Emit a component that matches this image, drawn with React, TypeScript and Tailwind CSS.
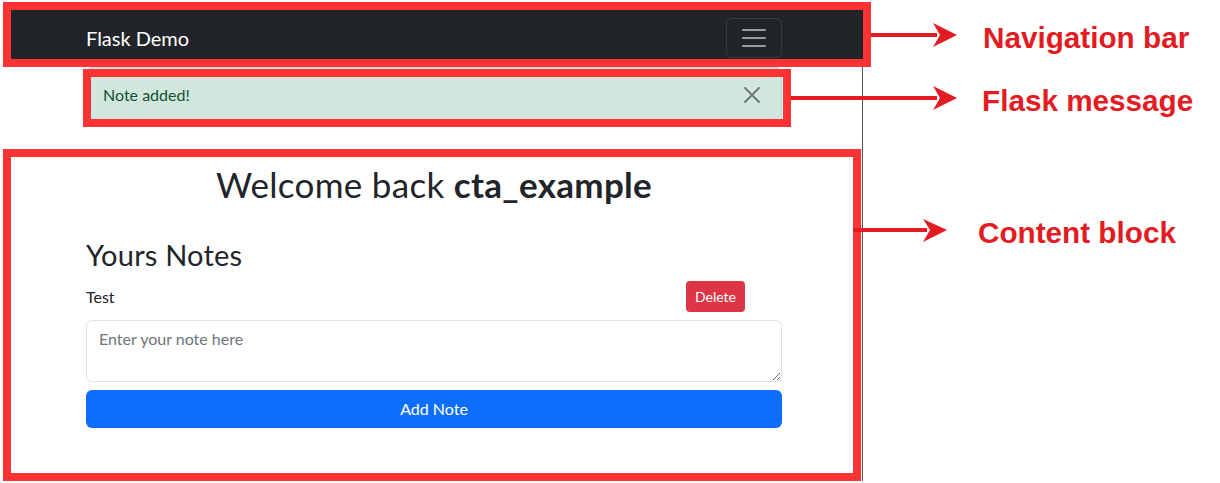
import React from 'react'

const labelClass =
    'absolute text-[29.7px] leading-[30px] font-bold text-[#e31b23] whitespace-nowrap'

function Hamburger() {
    return (
        <svg width="30" height="30" viewBox="0 0 30 30">
            <path
                d="M4 7h22M4 15h22M4 23h22"
                stroke="rgba(255,255,255,0.55)"
                strokeWidth="2"
                strokeLinecap="round"
            />
        </svg>
    )
}

function CloseIcon() {
    return (
        <svg width="16" height="16" viewBox="0 0 16 16">
            <path
                d="M1 1l14 14M15 1L1 15"
                stroke="#6b7772"
                strokeWidth="1.8"
                strokeLinecap="round"
            />
        </svg>
    )
}

function Arrows() {
    return (
        <svg
            className="absolute left-0 top-0 pointer-events-none"
            width="1220"
            height="483"
            viewBox="0 0 1220 483">
            <g fill="#e31b23">
                <rect x="871" y="33" width="66" height="4" />
                <polygon points="933,23 957,35 933,47 940,35" />
                <rect x="791" y="96" width="146" height="4" />
                <polygon points="933,86 957,98 933,110 940,98" />
                <rect x="853" y="228" width="74" height="4" />
                <polygon points="923,219 947,230 923,242 930,230" />
            </g>
        </svg>
    )
}

export default function App() {
    return (
        <div
            className="relative w-[1220px] h-[483px] overflow-hidden bg-white"
            style={{ fontFamily: 'Lato, "Noto Sans", sans-serif' }}>
            {/* the flask page itself */}
            <div className="ml-[11px] w-[852px] pt-[10px]">
                <nav className="h-[55px] bg-[#212529] flex items-center justify-between pl-[75px] pr-[81px]">
                    <span className="text-white text-[20px] leading-[30px]">Flask Demo</span>
                    <button className="w-[56px] h-[40px] flex items-center justify-center rounded-md border border-white/10">
                        <Hamburger />
                    </button>
                </nav>
                <div className="h-[416px] border-r border-[#555] pl-[75px]">
                    <div className="w-[696px] pt-[2px]">
                        <div className="h-[56px] flex items-center justify-between pl-[16px] pr-[21px] bg-[#d1e7dd] border border-[#badbcc] rounded-md text-[#0f5132] text-[16px] leading-[24px]">
                            <span>Note added!</span>
                            <CloseIcon />
                        </div>
                        <h1 className="mt-[40px] text-center text-[35px] leading-[42px] tracking-[0.3px] font-normal text-[#212529]">
                            Welcome back <b className="font-bold">cta_example</b>
                        </h1>
                        <h2 className="mt-[32px] text-[29px] leading-[35px] tracking-[0.2px] font-normal text-[#212529]">
                            Yours Notes
                        </h2>
                        <div className="mt-[9px] w-[659px] flex items-center justify-between">
                            <span className="text-[16px] text-[#212529]">Test</span>
                            <button className="w-[59px] h-[31px] rounded bg-[#dc3545] text-white text-[14px]">
                                Delete
                            </button>
                        </div>
                        <textarea
                            className="mt-[8px] block w-[696px] h-[62px] border border-[#dee2e6] rounded-md px-[12px] py-[6px] text-[16px] leading-[24px] placeholder:text-[#6c757d] outline-none"
                            placeholder="Enter your note here"
                        />
                        <button className="mt-[8px] w-[696px] h-[38px] rounded-md bg-[#0d6efd] text-white text-[16px]">
                            Add Note
                        </button>
                    </div>
                </div>
            </div>

            {/* annotation boxes */}
            <div className="absolute left-[3px] top-[2px] w-[868px] h-[65px] border-8 border-[#ff3333]" />
            <div className="absolute left-[83px] top-[69px] w-[708px] h-[58px] border-8 border-[#ff3333]" />
            <div className="absolute left-[3px] top-[149px] w-[858px] h-[332px] border-8 border-[#ff3333]" />

            <Arrows />
            <div className={`${labelClass} left-[983px] top-[23px]`} style={{ fontFamily: '"Liberation Sans", Arial, sans-serif' }}>
                Navigation bar
            </div>
            <div className={`${labelClass} left-[982px] top-[86px]`} style={{ fontFamily: '"Liberation Sans", Arial, sans-serif' }}>
                Flask message
            </div>
            <div className={`${labelClass} left-[978px] top-[218px]`} style={{ fontFamily: '"Liberation Sans", Arial, sans-serif' }}>
                Content block
            </div>
        </div>
    )
}
